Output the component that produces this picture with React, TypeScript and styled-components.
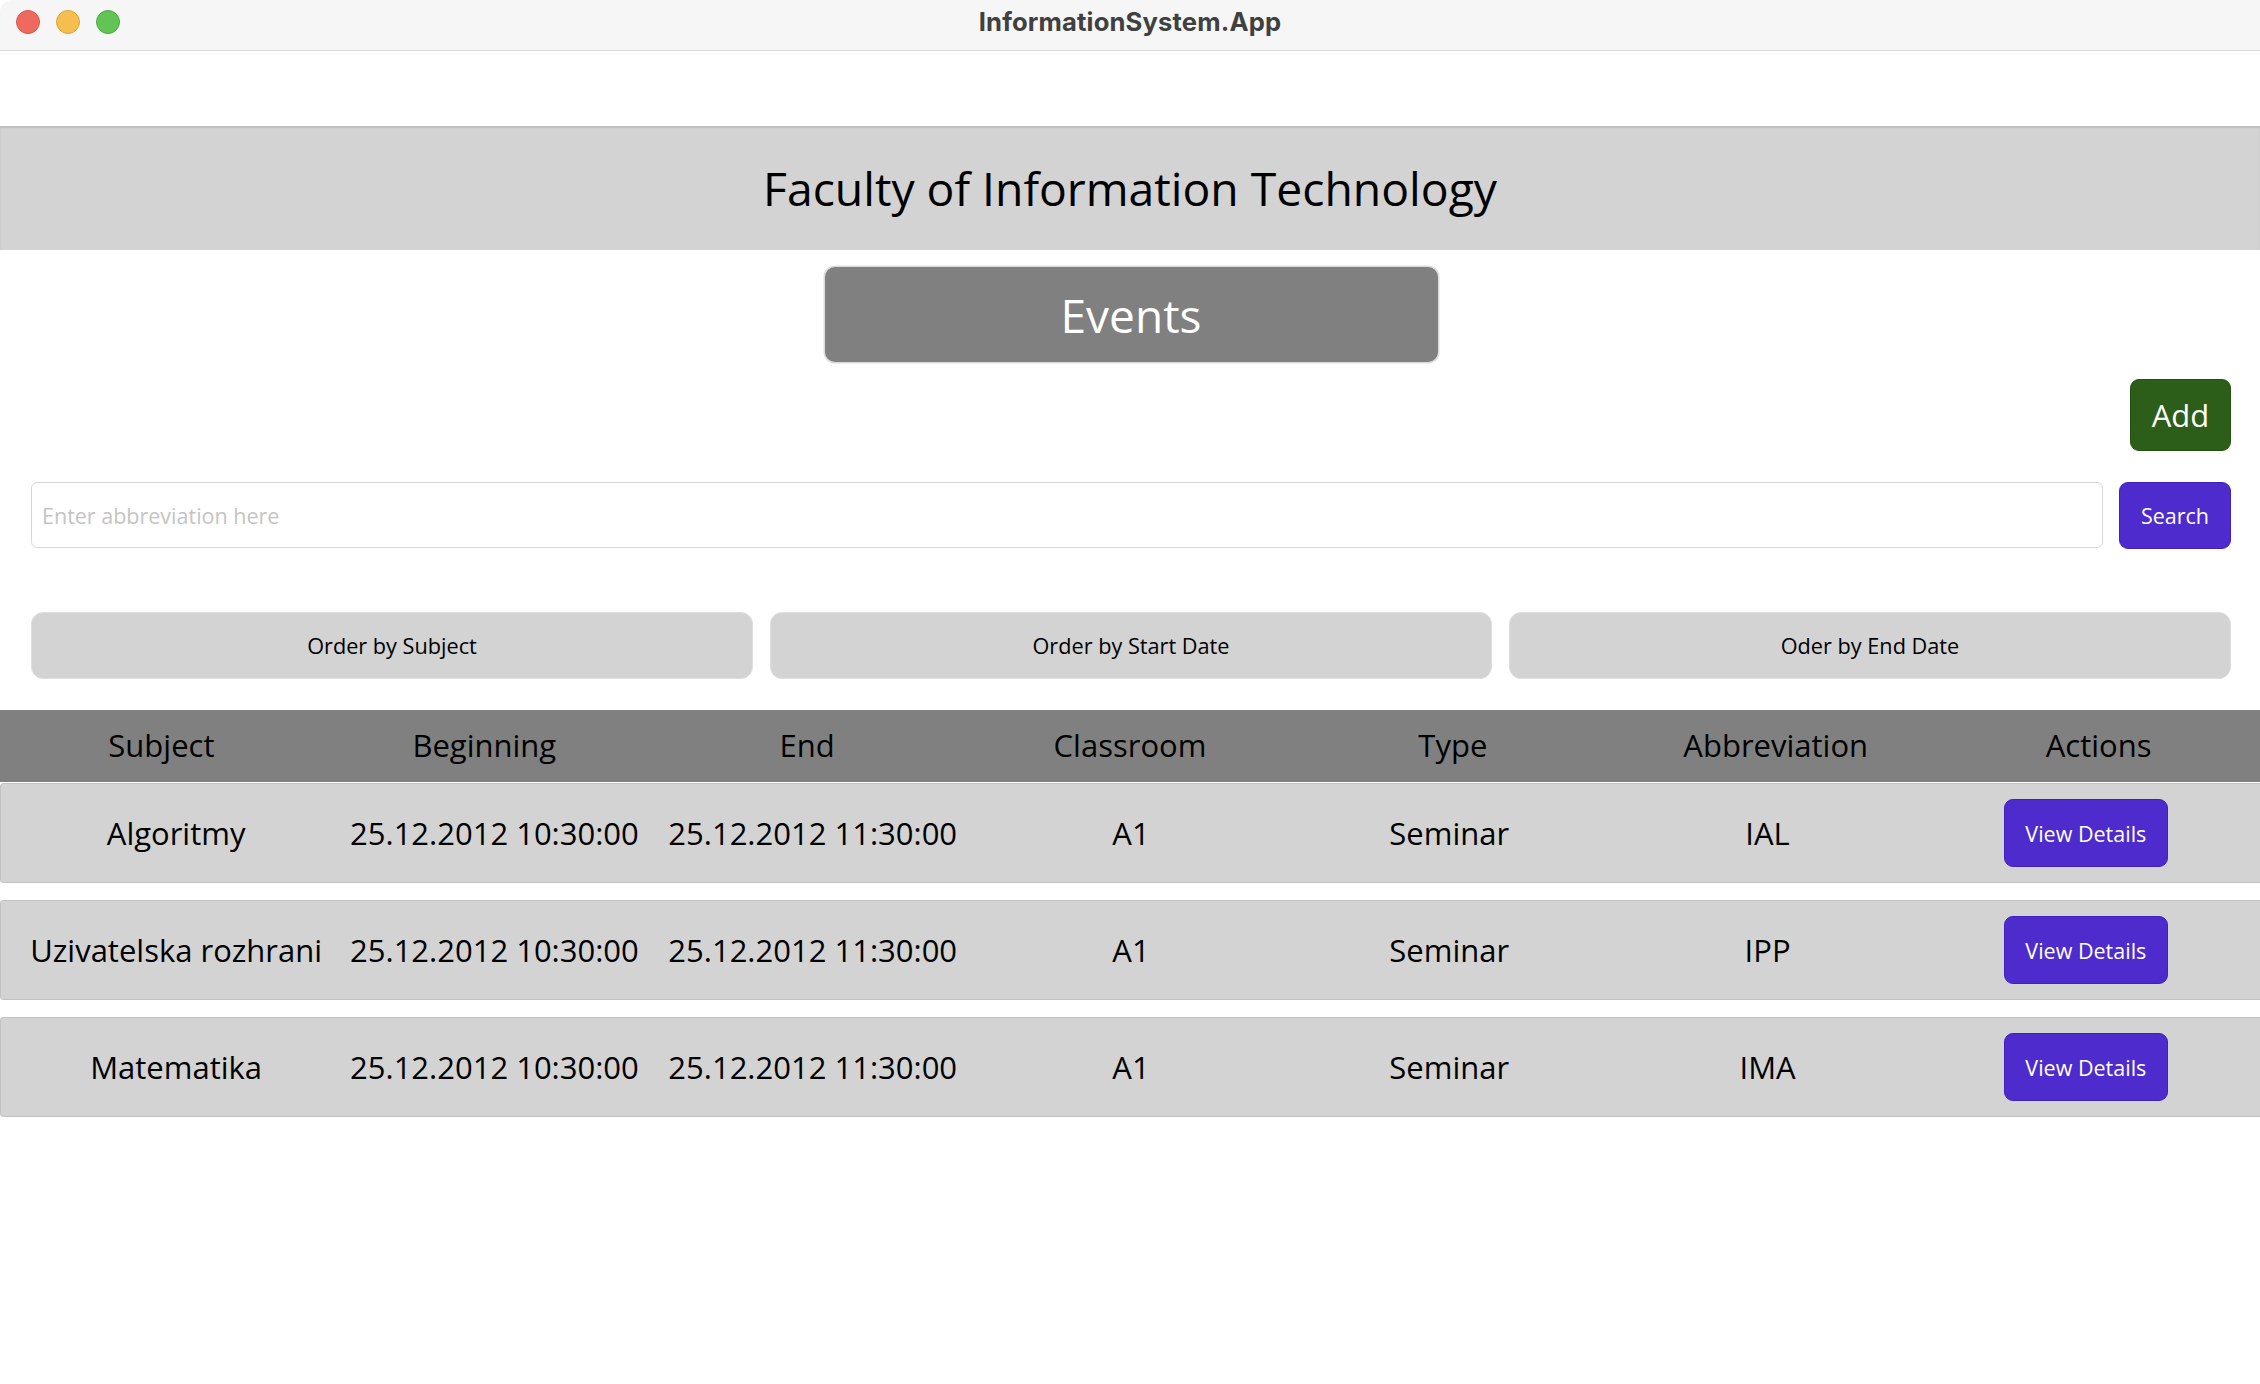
import React from "react";
import styled, { createGlobalStyle } from "styled-components";

const GlobalStyle = createGlobalStyle`
  html, body {
    margin: 0;
    padding: 0;
    background: #ffffff;
    overflow: hidden;
  }
  * { box-sizing: border-box; }
  body {
    font-family: "Open Sans", "Noto Sans", sans-serif;
    color: #000;
  }
`;

const Window = styled.div`
  width: 2260px;
  height: 1384px;
  display: flex;
  flex-direction: column;
  background: #fff;
`;

const TitleBar = styled.div`
  height: 51px;
  background: #f6f6f6;
  border-bottom: 1px solid #d9d9d9;
  border-top-left-radius: 12px;
  display: grid;
  grid-template-columns: 1fr auto 1fr;
  align-items: center;
  padding: 0 16px 7px 16px;
`;

const Lights = styled.div`
  display: flex;
  gap: 16px;
`;

const Light = styled.span<{ $fill: string; $edge: string }>`
  width: 24px;
  height: 24px;
  border-radius: 50%;
  background: ${(p) => p.$fill};
  border: 1px solid ${(p) => p.$edge};
`;

const WindowTitle = styled.div`
  font-family: "Inter", "Roboto", sans-serif;
  font-weight: 700;
  font-size: 25.6px;
  color: #404040;
  letter-spacing: 0.15px;
`;

const Spacer = styled.div`
  height: 75px;
`;

const Banner = styled.header`
  height: 124px;
  background: #d3d3d3;
  box-shadow: inset 0 2px 2px rgba(0, 0, 0, 0.1);
  display: flex;
  align-items: center;
  justify-content: center;
  font-size: 46.3px;
  color: #000;
`;

const Content = styled.main`
  display: flex;
  flex-direction: column;
  padding: 0 29px 0 31px;
`;

const PageTitle = styled.div`
  align-self: center;
  margin-top: 17px;
  width: 613px;
  height: 95px;
  background: #808080;
  border-radius: 10px;
  box-shadow: 0 0 0 1.5px #dcdcdc;
  color: #fff;
  font-size: 46px;
  display: flex;
  align-items: center;
  justify-content: center;
`;

const AddButton = styled.button`
  align-self: flex-end;
  margin-top: 17px;
  width: 101px;
  height: 72px;
  background: #2c5e1a;
  border: 1px solid #245213;
  border-radius: 9px;
  color: #fff;
  font-family: "Open Sans", sans-serif;
  font-size: 31px;
  padding: 0;
`;

const SearchRow = styled.div`
  margin-top: 31px;
  display: flex;
  gap: 16px;
  height: 67px;
`;

const SearchInput = styled.input`
  flex: 1;
  height: 66px;
  border: 1px solid #d8d8d8;
  border-radius: 6px;
  padding: 0 10px;
  font-family: "Open Sans", sans-serif;
  font-size: 21.5px;
  color: #000;
  outline: none;
  &::placeholder {
    color: #c4c4c4;
  }
`;

const PrimaryButton = styled.button<{ $w: number; $h: number }>`
  width: ${(p) => p.$w}px;
  height: ${(p) => p.$h}px;
  background: #4d2bcc;
  border: 1px solid #4020c0;
  border-radius: 9px;
  color: #fff;
  font-family: "Open Sans", sans-serif;
  font-size: 21.5px;
  padding: 0;
`;

const OrderRow = styled.div`
  margin-top: 63px;
  display: grid;
  grid-template-columns: repeat(3, 1fr);
  gap: 17px;
`;

const OrderButton = styled.button`
  height: 67px;
  background: #d3d3d3;
  border: 1px solid #dedede;
  border-radius: 12px;
  color: #000;
  font-family: "Open Sans", sans-serif;
  font-size: 21.7px;
  padding: 0;
`;

const Table = styled.section`
  margin-top: 31px;
  display: flex;
  flex-direction: column;
  gap: 17px;
`;

const HeaderRow = styled.div`
  height: 72px;
  background: #808080;
  display: grid;
  grid-template-columns: repeat(7, 1fr);
  align-items: center;
  font-size: 31px;
  color: #000;
  margin-bottom: -16px;
`;

const HeadCell = styled.div`
  text-align: center;
  padding-bottom: 2px;
`;

const DataRow = styled.div`
  height: 100px;
  background: #d3d3d3;
  border: 1px solid #c2c2c2;
  border-right: none;
  border-radius: 4px 0 0 4px;
  display: grid;
  grid-template-columns: repeat(7, 1fr);
  align-items: center;
  padding: 0 15px 0 16px;
  font-size: 31px;
`;

const Cell = styled.div`
  text-align: center;
  white-space: nowrap;
  display: flex;
  justify-content: center;
`;

const rows = [
  { subject: "Algoritmy", abbr: "IAL" },
  { subject: "Uzivatelska rozhrani", abbr: "IPP" },
  { subject: "Matematika", abbr: "IMA" },
];

const headers = ["Subject", "Beginning", "End", "Classroom", "Type", "Abbreviation", "Actions"];

export default function App() {
  return (
    <>
      <GlobalStyle />
      <Window>
        <TitleBar>
          <Lights>
            <Light $fill="#ee6a5f" $edge="#d9574d" />
            <Light $fill="#f5bf4f" $edge="#d9a53c" />
            <Light $fill="#61c454" $edge="#4ea943" />
          </Lights>
          <WindowTitle>InformationSystem.App</WindowTitle>
          <div />
        </TitleBar>
        <Spacer />
        <Banner>Faculty of Information Technology</Banner>
        <Content>
          <PageTitle>Events</PageTitle>
          <AddButton>Add</AddButton>
          <SearchRow>
            <SearchInput placeholder="Enter abbreviation here" />
            <PrimaryButton $w={112} $h={67}>Search</PrimaryButton>
          </SearchRow>
          <OrderRow>
            <OrderButton>Order by Subject</OrderButton>
            <OrderButton>Order by Start Date</OrderButton>
            <OrderButton>Oder by End Date</OrderButton>
          </OrderRow>
        </Content>
        <Table>
          <HeaderRow>
            {headers.map((h) => (
              <HeadCell key={h}>{h}</HeadCell>
            ))}
          </HeaderRow>
          {rows.map((r) => (
            <DataRow key={r.abbr}>
              <Cell>{r.subject}</Cell>
              <Cell>25.12.2012 10:30:00</Cell>
              <Cell>25.12.2012 11:30:00</Cell>
              <Cell>A1</Cell>
              <Cell>Seminar</Cell>
              <Cell>{r.abbr}</Cell>
              <Cell>
                <PrimaryButton $w={164} $h={68}>View Details</PrimaryButton>
              </Cell>
            </DataRow>
          ))}
        </Table>
      </Window>
    </>
  );
}
